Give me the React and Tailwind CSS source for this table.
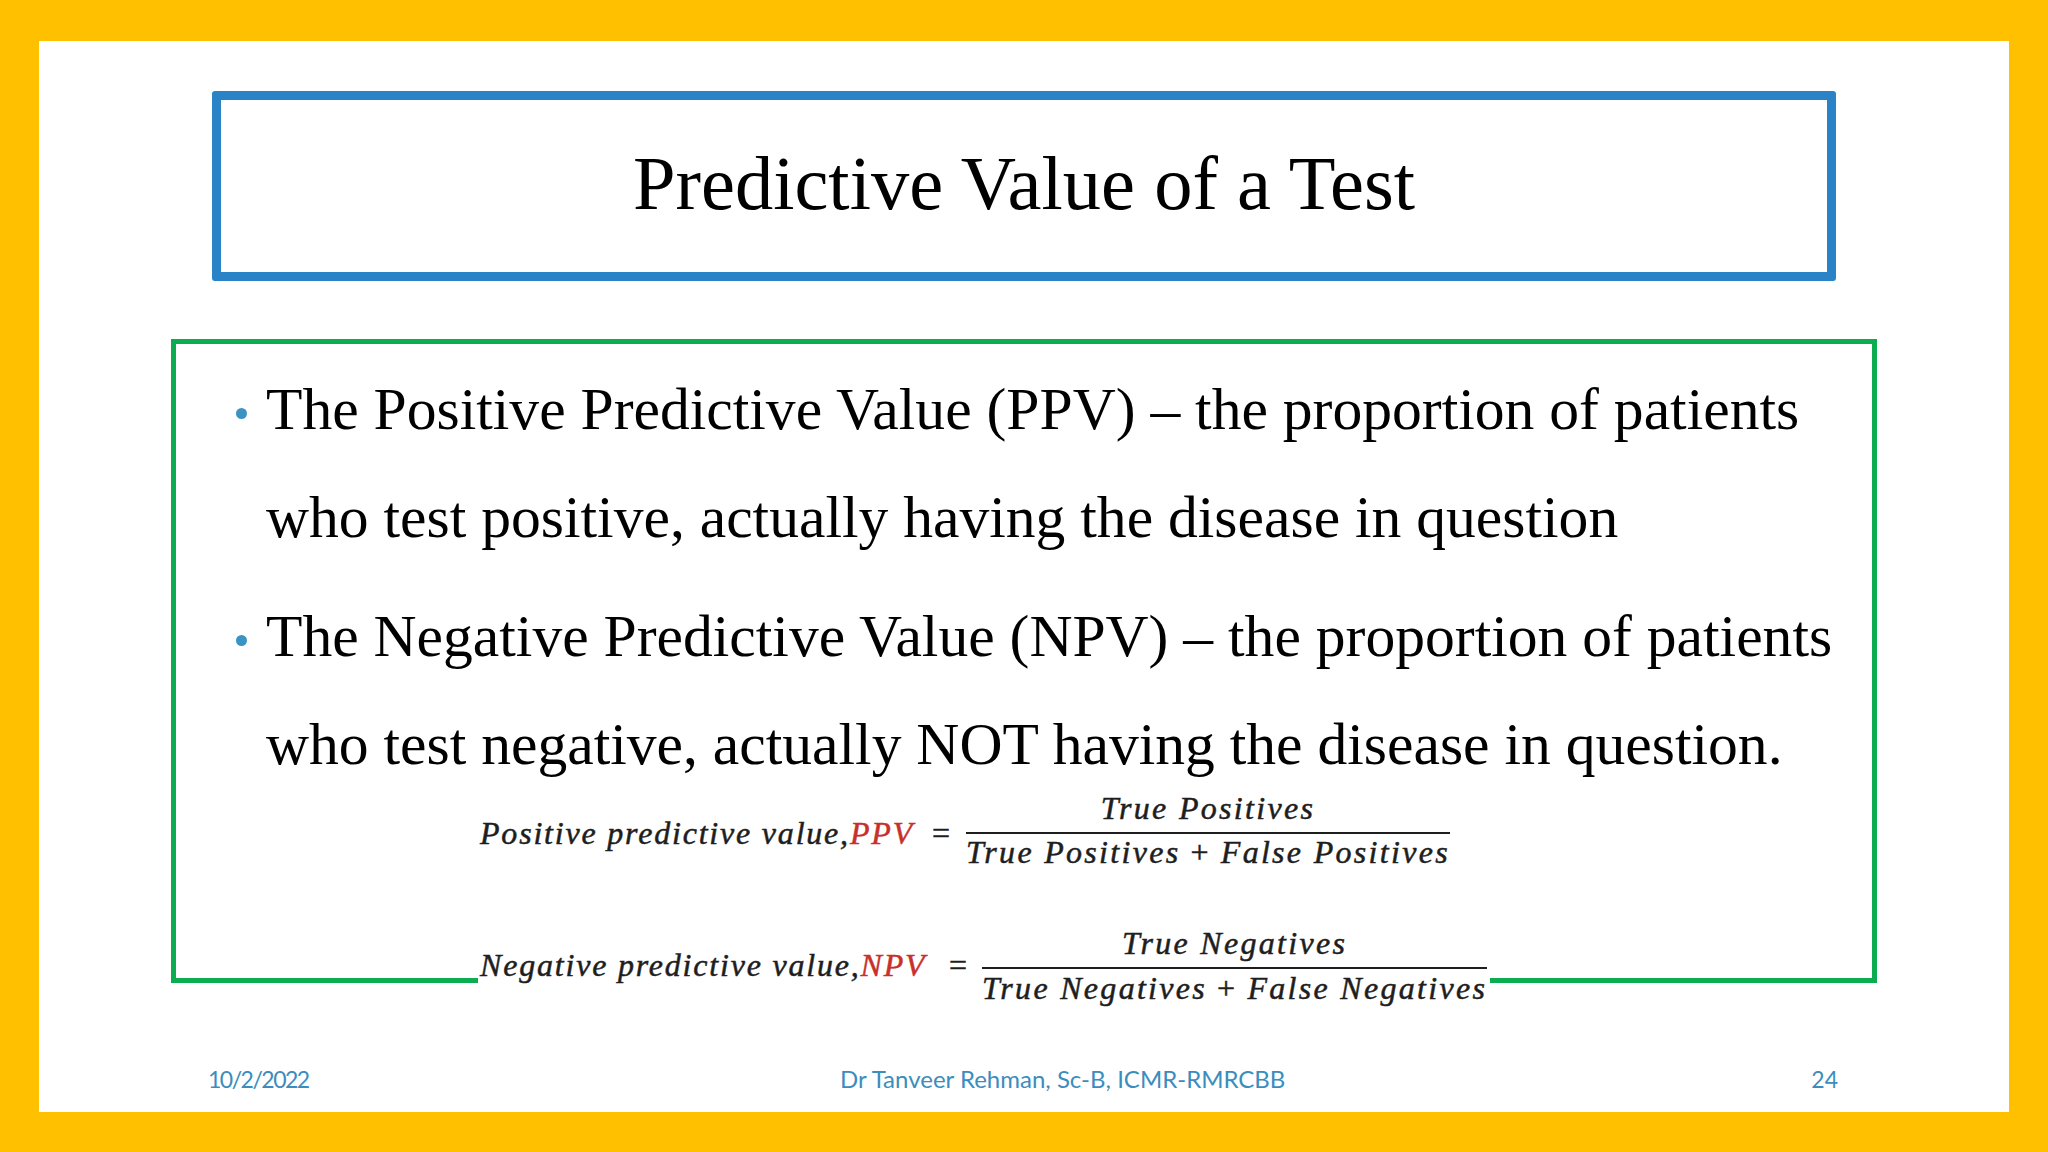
export default function App() {
  const serif = { fontFamily: '"Liberation Serif", "Times New Roman", serif' };
  const sans = { fontFamily: 'Lato, "Open Sans", sans-serif' };
  return (
    <div className="w-[2048px] h-[1152px] bg-[#ffc000] pt-[41px] pl-[39px] pr-[39px] pb-[40px]">
      <div className="relative w-full h-full bg-white flex flex-col">
        {/* Title box */}
        <div className="ml-[173px] mt-[50px] w-[1624px] h-[190px] border-[9px] border-[#2a82c7] rounded-[3px] flex items-center justify-center">
          <h1 className="text-[76.5px] leading-none text-black mt-[-3px]" style={serif}>
            Predictive Value of a Test
          </h1>
        </div>

        {/* Content box */}
        <div className="ml-[132px] mt-[58px] w-[1706px] h-[644px] border-[5px] border-[#0bad50] pt-[11px] pl-[60px]" style={serif}>
          <div className="flex items-start">
            <span className="w-[11px] h-[11px] rounded-full bg-[#3a93c3] mt-[53px] shrink-0"></span>
            <p className="ml-[19px] text-[59.6px] leading-[108px] text-black whitespace-nowrap">
              The Positive Predictive Value (PPV) – the proportion of patients
              <br />
              who test positive, actually having the disease in question
            </p>
          </div>
          <div className="flex items-start mt-[11px]">
            <span className="w-[11px] h-[11px] rounded-full bg-[#3a93c3] mt-[53px] shrink-0"></span>
            <p className="ml-[19px] text-[59.6px] leading-[108px] text-black whitespace-nowrap">
              The Negative Predictive Value (NPV) – the proportion of patients
              <br />
              who test negative, actually NOT having the disease in question.
            </p>
          </div>
        </div>

        {/* Footer */}
        <div className="mt-[81px] flex items-center text-[23px] leading-[30px] text-[#3b8dbd]" style={sans}>
          <span className="ml-[169px] w-[632px] tracking-[-1.5px]">10/2/2022</span>
          <span className="text-[24px]">Dr Tanveer Rehman, Sc-B, ICMR-RMRCBB</span>
          <span className="flex-1 text-right pr-[171px]">24</span>
        </div>

        {/* Formula image overlay */}
        <div
          className="absolute left-[439px] top-[744px] w-[1012px] h-[235px] bg-white pl-[2px] text-[#1e1e1e] italic text-[32px] leading-[30px] [-webkit-text-stroke:0.5px_#1e1e1e]"
          style={serif}
        >
          <div className="flex items-start mt-[8px]">
            <div className="w-[452px] mt-[25px] whitespace-nowrap tracking-[1.8px]">
              Positive predictive value,<span className="text-[#c8302c] [-webkit-text-stroke:0.5px_#c8302c]">PPV</span>
            </div>
            <div className="w-[34px] mt-[25px] not-italic">=</div>
            <div className="flex flex-col items-center tracking-[2.3px]">
              <div className="whitespace-nowrap mb-[9px]">True Positives</div>
              <div className="h-[2px] w-full bg-[#1e1e1e]"></div>
              <div className="whitespace-nowrap mt-[3px]">
                True Positives<span className="not-italic mx-[10px]">+</span>False Positives
              </div>
            </div>
          </div>
          <div className="flex items-start mt-[61px]">
            <div className="w-[469px] mt-[22px] whitespace-nowrap tracking-[1.8px]">
              Negative predictive value,<span className="text-[#c8302c] [-webkit-text-stroke:0.5px_#c8302c]">NPV</span>
            </div>
            <div className="w-[33px] mt-[22px] not-italic">=</div>
            <div className="flex flex-col items-center tracking-[2.3px]">
              <div className="whitespace-nowrap mb-[9px]">True Negatives</div>
              <div className="h-[2px] w-full bg-[#1e1e1e]"></div>
              <div className="whitespace-nowrap mt-[4px]">
                True Negatives<span className="not-italic mx-[10px]">+</span>False Negatives
              </div>
            </div>
          </div>
        </div>
      </div>
    </div>
  );
}
